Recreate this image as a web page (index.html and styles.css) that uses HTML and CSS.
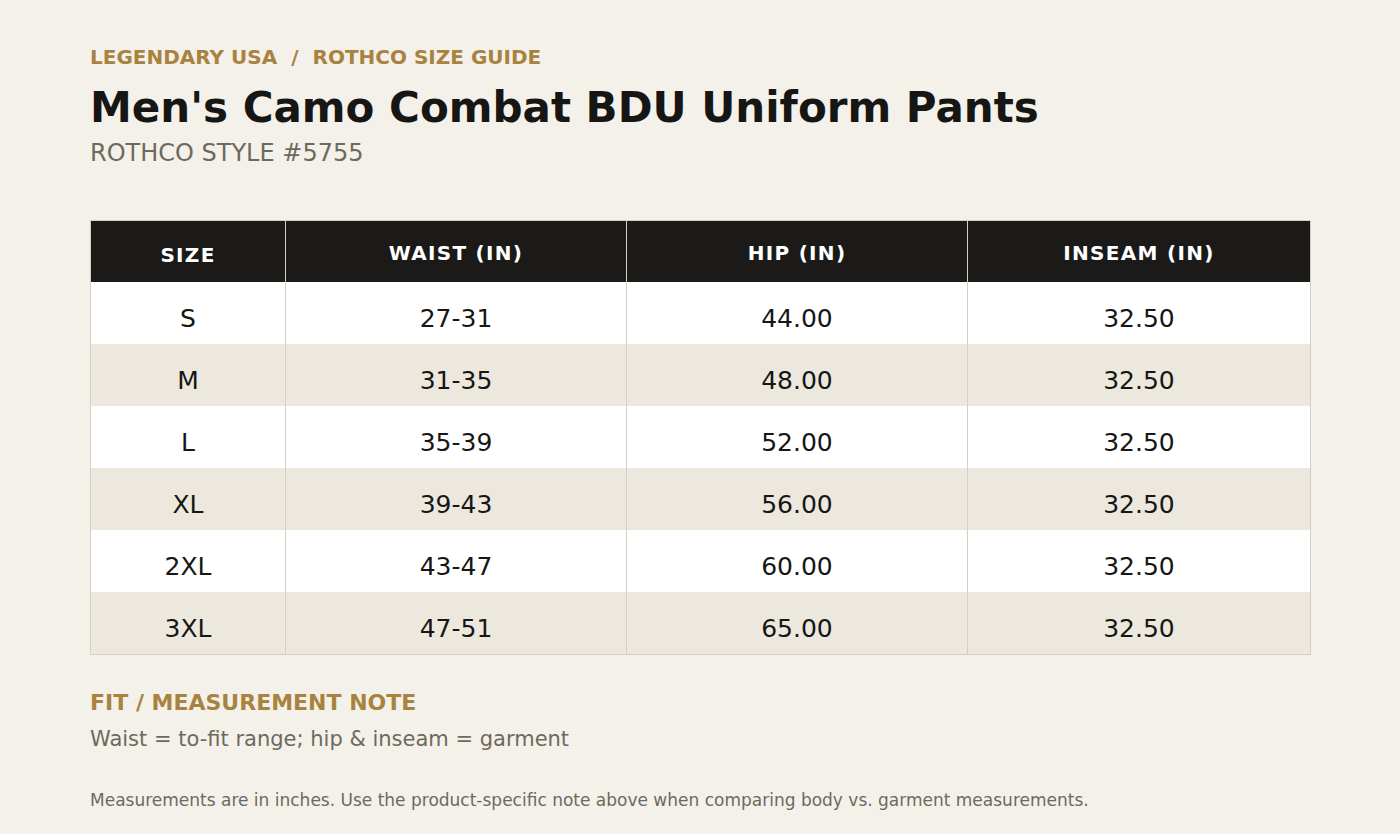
FILE: index.html
```
<!DOCTYPE html>
<html lang="en">
<head>
<meta charset="utf-8">
<title>Men's Camo Combat BDU Uniform Pants – Size Guide</title>
<link rel="stylesheet" href="styles.css">
</head>
<body>
<main class="page">
  <header class="head">
    <div class="crumb"><span>LEGENDARY USA</span><span class="sep">/</span><span>ROTHCO SIZE GUIDE</span></div>
    <h1 class="title">Men's Camo Combat BDU Uniform Pants</h1>
    <div class="style">ROTHCO STYLE #5755</div>
  </header>

  <table class="chart">
    <colgroup>
      <col class="c-size"><col class="c-mid"><col class="c-mid"><col class="c-last">
    </colgroup>
    <thead>
      <tr>
        <th class="th-size">SIZE</th>
        <th>WAIST (IN)</th>
        <th>HIP (IN)</th>
        <th>INSEAM (IN)</th>
      </tr>
    </thead>
    <tbody>
      <tr><td>S</td><td>27-31</td><td>44.00</td><td>32.50</td></tr>
      <tr><td>M</td><td>31-35</td><td>48.00</td><td>32.50</td></tr>
      <tr><td>L</td><td>35-39</td><td>52.00</td><td>32.50</td></tr>
      <tr><td>XL</td><td>39-43</td><td>56.00</td><td>32.50</td></tr>
      <tr><td>2XL</td><td>43-47</td><td>60.00</td><td>32.50</td></tr>
      <tr><td>3XL</td><td>47-51</td><td>65.00</td><td>32.50</td></tr>
    </tbody>
  </table>

  <section class="note">
    <h2 class="note-title">FIT / MEASUREMENT NOTE</h2>
    <p class="note-text">Waist = to-fit range; hip &amp; inseam = garment</p>
  </section>

  <p class="foot">Measurements are in inches. Use the product-specific note above when comparing body vs. garment measurements.</p>
</main>
</body>
</html>
```

FILE: styles.css
```
* { box-sizing: border-box; }

html, body {
  margin: 0;
  padding: 0;
  background: #f4f1ea;
}

body {
  font-family: "DejaVu Sans", "Noto Sans", sans-serif;
  color: #161614;
}

.page {
  padding: 46px 90px 0 90px;
  width: 1400px;
}

.crumb {
  font-size: 20px;
  font-weight: bold;
  color: #a8833f;
  line-height: 23px;
}

.crumb .sep {
  margin: 0 14px;
}

.title {
  margin: 14px 0 0 0;
  font-size: 42px;
  font-weight: bold;
  line-height: 49px;
  color: #161614;
}

.style {
  margin-top: 7px;
  font-size: 24px;
  line-height: 28px;
  color: #6d6a5d;
}

.chart {
  margin-top: 53px;
  width: 1220px;
  table-layout: fixed;
  border-collapse: collapse;
  border: 1px solid #d6d0c4;
}

.c-size { width: 195px; }
.c-mid { width: 341px; }
.c-last { width: 343px; }

.chart th {
  background: #1b1a18;
  color: #ffffff;
  font-size: 20px;
  font-weight: bold;
  letter-spacing: 1.3px;
  line-height: 23px;
  padding: 21px 8px 17px;
  text-align: center;
  vertical-align: top;
  border-left: 1px solid #d6d0c4;
  border-right: 1px solid #d6d0c4;
}

.chart th.th-size {
  padding-top: 23px;
  padding-bottom: 15px;
}

.chart td {
  padding: 22px 8px 11px;
  font-size: 25px;
  line-height: 29px;
  text-align: center;
  vertical-align: top;
  color: #161614;
  background: #ffffff;
  border-left: 1px solid #d6d0c4;
  border-right: 1px solid #d6d0c4;
}

.chart tbody tr:nth-child(even) td {
  background: #ece8de;
}

.note {
  margin-top: 35px;
}

.note-title {
  margin: 0;
  font-size: 22px;
  font-weight: bold;
  line-height: 26px;
  color: #a8833f;
}

.note-text {
  margin: 11px 0 0 0;
  font-size: 21px;
  line-height: 24px;
  color: #6d6a5d;
}

.foot {
  margin: 39px 0 0 0;
  font-size: 17px;
  line-height: 20px;
  color: #6d6a5d;
}
```
